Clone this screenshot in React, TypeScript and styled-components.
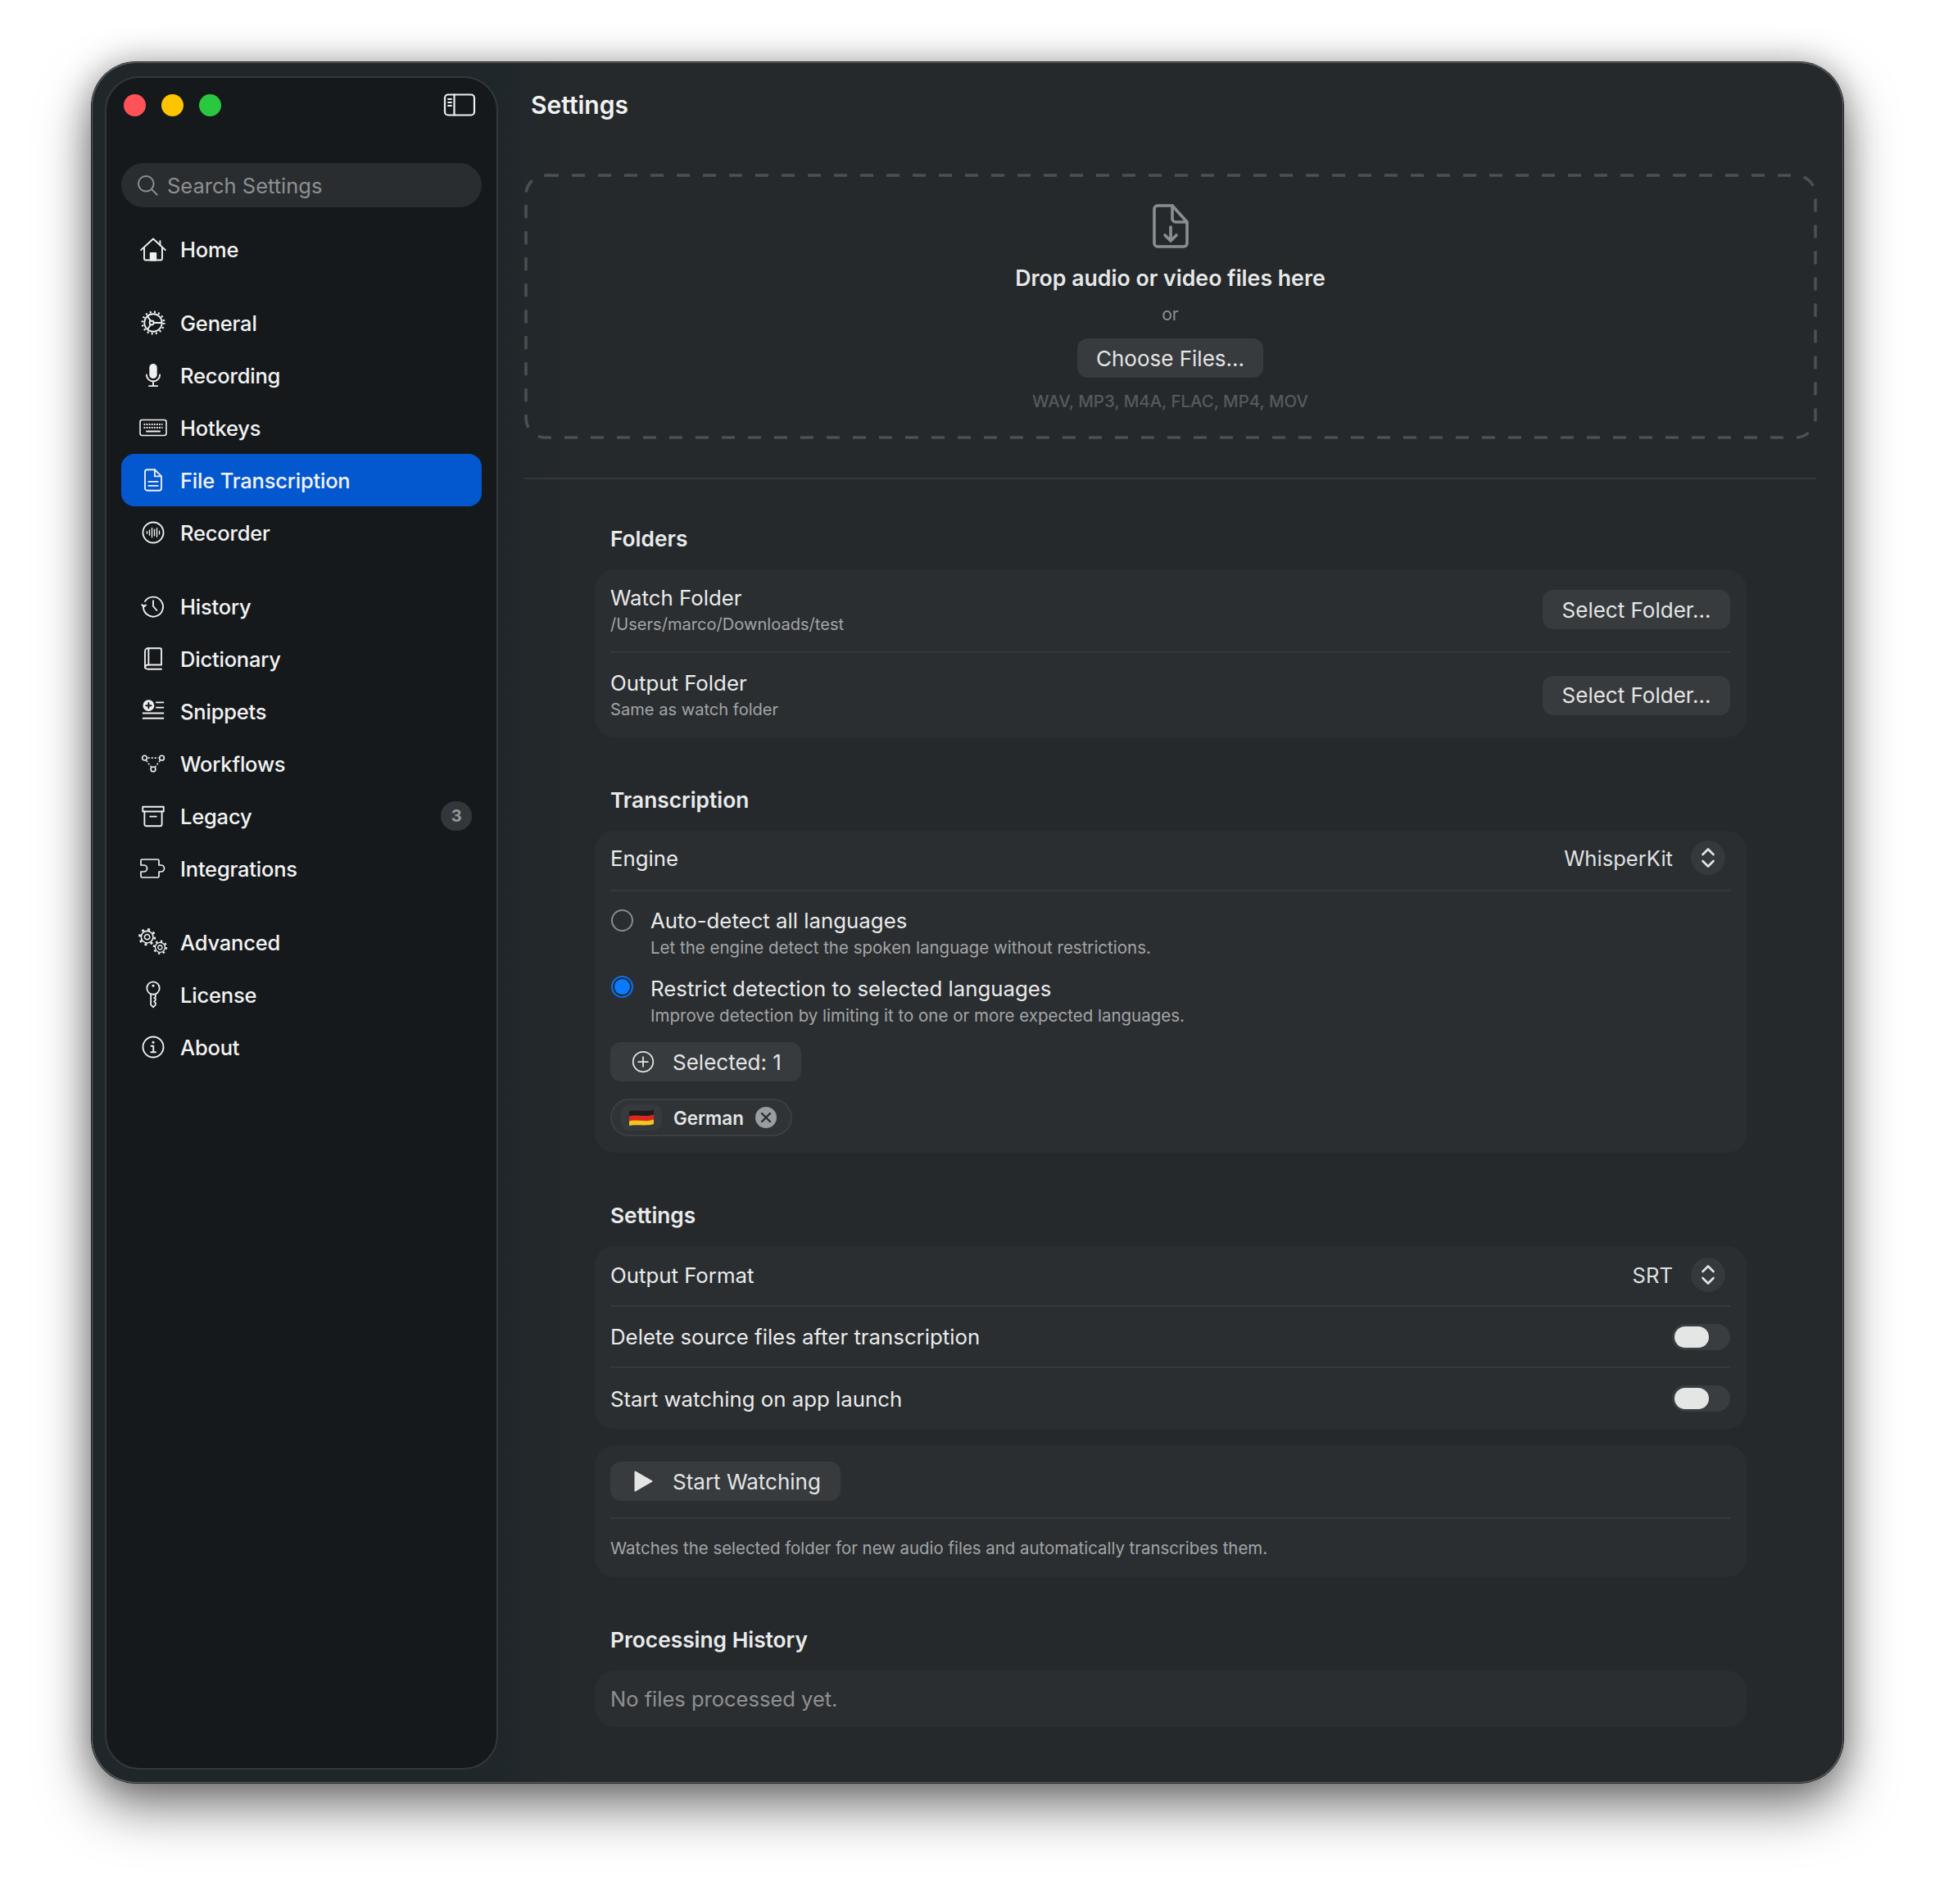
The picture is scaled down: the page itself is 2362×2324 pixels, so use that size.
import React from "react";
import styled, { createGlobalStyle } from "styled-components";

const GlobalStyle = createGlobalStyle`
  html, body {
    margin: 0;
    padding: 0;
    background: #fff;
    font-family: Inter, "Noto Sans", "Liberation Sans", sans-serif;
    -webkit-font-smoothing: antialiased;
  }
  * { box-sizing: border-box; }
`;

const Page = styled.div`
  width: 2362px;
  height: 2324px;
  padding: 76px 112px 0 112px;
  overflow: hidden;
`;

const Window = styled.div`
  display: flex;
  width: 2138px;
  height: 2100px;
  padding: 17px 0 16px 16px;
  border-radius: 54px;
  background: linear-gradient(90deg, #20272a 0, #20272a 500px, #25292c 590px);
  box-shadow:
    0 0 0 1px #1c1c1c,
    inset 0 0 0 1px #5c6063,
    0 30px 64px rgba(0, 0, 0, 0.5),
    0 0 40px rgba(0, 0, 0, 0.28);
`;

/* sidebar */

const Sidebar = styled.aside`
  flex: none;
  width: 480px;
  padding: 0 18px;
  border: 2px solid #33383b;
  border-radius: 42px;
  background: #16191c;
  color: #eef0f0;
`;

const TopBar = styled.div`
  display: flex;
  align-items: center;
  justify-content: space-between;
  height: 66px;
  margin: 0 0 0 3px;
  padding-right: 7px;
`;

const Lights = styled.div`
  display: flex;
  gap: 19px;
`;

const Light = styled.span<{ $color: string }>`
  width: 27px;
  height: 27px;
  border-radius: 50%;
  background: ${(p) => p.$color};
`;

const Search = styled.div`
  display: flex;
  align-items: center;
  gap: 10px;
  height: 54px;
  margin-top: 38px;
  padding-left: 18px;
  border-radius: 27px;
  background: #2a2d30;
  color: #8d9092;
  font-size: 25.5px;
`;

const NavGroup = styled.nav`
  margin-top: 26px;
  &:first-of-type {
    margin-top: 19px;
  }
`;

const NavRow = styled.div<{ $active?: boolean }>`
  display: flex;
  align-items: center;
  height: 64px;
  padding: 0 14px 0 16px;
  border-radius: 16px;
  background: ${(p) => (p.$active ? "#0358d0" : "transparent")};
  color: #f2f3f3;
  font-size: 25.5px;
  font-weight: 500;
  letter-spacing: -0.2px;
`;

const NavIcon = styled.span`
  display: flex;
  flex: none;
  align-items: center;
  justify-content: center;
  width: 46px;
  margin-right: 10px;
  color: #eef0f0;
`;

const NavLabel = styled.span`
  flex: 1;
`;

const Badge = styled.span`
  display: flex;
  align-items: center;
  justify-content: center;
  width: 38px;
  height: 36px;
  margin-right: -2px;
  border-radius: 18px;
  background: #34373a;
  color: #95989a;
  font-size: 20px;
  font-weight: 700;
`;

/* main column */

const Main = styled.main`
  flex: 1;
  min-width: 0;
  margin-top: -17px;
  padding: 0 33px 0 32px;
`;

const TitleBar = styled.header`
  display: flex;
  align-items: center;
  height: 104px;
  padding-left: 8px;
  color: #f1f2f2;
  font-size: 30px;
  font-weight: 600;
`;

const Dropzone = styled.section`
  position: relative;
  display: flex;
  flex-direction: column;
  align-items: center;
  height: 323px;
  margin-top: 32px;
  padding-top: 37px;
`;

const DashFrame = styled.svg`
  position: absolute;
  top: 1.5px;
  left: 1.5px;
  width: calc(100% - 3px);
  height: calc(100% - 3px);
  overflow: visible;
`;

const DropTitle = styled.div`
  margin-top: 18px;
  color: #e6e8e8;
  font-size: 26.7px;
  font-weight: 600;
  line-height: 36px;
`;

const DropOr = styled.div`
  margin-top: 13px;
  color: #8d9092;
  font-size: 21px;
  line-height: 28px;
`;

const Formats = styled.div`
  margin-top: 15px;
  color: #565a5d;
  font-size: 20.4px;
  font-weight: 500;
  line-height: 28px;
`;

const Button = styled.button<{ $width?: number; $top?: number }>`
  display: inline-flex;
  flex: none;
  align-items: center;
  justify-content: ${(p) => (p.$width ? "center" : "flex-start")};
  gap: 22px;
  width: ${(p) => (p.$width ? `${p.$width}px` : "auto")};
  height: 48px;
  margin-top: ${(p) => p.$top ?? 0}px;
  padding: ${(p) => (p.$width ? "0" : "0 24px 0 26px")};
  border: 0;
  border-radius: 13px;
  background: #383b3e;
  color: #e3e5e5;
  font-family: inherit;
  font-size: 26px;
  font-weight: 400;
`;

const Rule = styled.hr`
  height: 2px;
  margin: 48px 0 0;
  border: 0;
  background: #34383b;
`;

const Content = styled.div`
  margin: 0 85px 0 86px;
  padding-top: 54px;
`;

const Section = styled.section`
  margin-top: 58px;
  &:first-child {
    margin-top: 0;
  }
`;

const SectionTitle = styled.h2`
  height: 36px;
  margin: 0 0 20px;
  padding: 1px 0 0 19px;
  color: #e9ebeb;
  font-size: 26.3px;
  font-weight: 600;
  line-height: 36px;
`;

const Card = styled.div<{ $top?: number }>`
  margin-top: ${(p) => p.$top ?? 0}px;
  padding: 0 20px 0 19px;
  border-radius: 24px;
  background: #2b2e31;
`;

const Row = styled.div<{ $height: number; $divider?: boolean; $pad?: number }>`
  display: flex;
  align-items: center;
  justify-content: space-between;
  height: ${(p) => p.$height}px;
  padding-bottom: ${(p) => p.$pad ?? 0}px;
  border-bottom: ${(p) => (p.$divider ? "2px solid #35393c" : "0")};
  color: #e9ebeb;
  font-size: 25.8px;
`;

const RowText = styled.div<{ $shift?: number }>`
  display: flex;
  flex-direction: column;
  margin-top: ${(p) => p.$shift ?? 0}px;
`;

const RowTitle = styled.div`
  color: #e9ebeb;
  font-size: 25.8px;
  line-height: 32px;
`;

const RowHint = styled.div`
  color: #a2a5a7;
  font-size: 20.1px;
  line-height: 32px;
`;

const Picker = styled.div`
  display: flex;
  align-items: center;
  gap: 22px;
  margin-right: 6px;
  color: #dfe1e2;
  font-size: 25.6px;
`;

const PickerKnob = styled.span`
  display: flex;
  align-items: center;
  justify-content: center;
  width: 42px;
  height: 42px;
  border-radius: 50%;
  background: #36393c;
  color: #e3e5e5;
`;

const Options = styled.div`
  padding: 20px 0 20px;
`;

const Option = styled.div<{ $top?: number }>`
  display: flex;
  gap: 21px;
  margin-top: ${(p) => p.$top ?? 0}px;
  padding-left: 1px;
`;

const Radio = styled.span<{ $on?: boolean; $nudge: number }>`
  flex: none;
  width: 27px;
  height: 27px;
  margin-top: ${(p) => p.$nudge}px;
  border-radius: 50%;
  border: 2px solid ${(p) => (p.$on ? "#0a6ff0" : "#8a8d8f")};
  background: ${(p) => (p.$on ? "#0a7bff" : "transparent")};
  box-shadow: ${(p) => (p.$on ? "inset 0 0 0 2px #24282b" : "none")};
`;

const OptionHint = styled.div`
  padding-top: 2px;
  height: 30px;
  color: #a2a5a7;
  font-size: 20.5px;
  line-height: 30px;
`;

const Chip = styled.div`
  display: inline-flex;
  align-items: center;
  height: 46px;
  margin-top: 21px;
  padding: 0 17px 0 11px;
  border: 2px solid #3b3f42;
  border-radius: 23px;
  background: #2f3336;
  color: #e3e5e5;
  font-size: 22.4px;
  font-weight: 600;
`;

const FlagBox = styled.span`
  display: flex;
  align-items: center;
  justify-content: center;
  width: 50px;
  height: 32px;
  margin-right: 14px;
  border-radius: 10px;
  background: #363a3d;
`;

const ChipClose = styled.span`
  display: flex;
  align-items: center;
  justify-content: center;
  width: 26px;
  height: 26px;
  margin-left: 14px;
  border-radius: 50%;
  background: #9a9d9f;
  color: #2b2e31;
`;

const Switch = styled.span`
  display: flex;
  align-items: center;
  width: 71px;
  height: 32px;
  padding-left: 3px;
  border-radius: 16px;
  background: #3a3d40;
`;

const SwitchKnob = styled.span`
  width: 42px;
  height: 26px;
  border-radius: 13px;
  background: #e4e5e5;
`;

const WatchTop = styled.div`
  padding: 20px 0;
  border-bottom: 2px solid #35393c;
`;

const WatchNote = styled.div`
  padding: 22px 0 21px;
  color: #a2a5a7;
  font-size: 20.4px;
  line-height: 28px;
`;

const EmptyNote = styled.div`
  display: flex;
  align-items: center;
  height: 69px;
  color: #8e9193;
  font-size: 25.5px;
`;

/* drawings */

const Svg = ({ w = 30, h = 30, box = "0 0 24 24", sw = 1.5, children }: { w?: number; h?: number; box?: string; sw?: number; children: React.ReactNode }) => (
  <svg width={w} height={h} viewBox={box} fill="none" stroke="currentColor" strokeWidth={sw} strokeLinecap="round" strokeLinejoin="round">
    {children}
  </svg>
);

const HomeIcon = () => (
  <Svg box="0 0 26 24" w={34} h={31}>
    <path d="M1.5 12.500 13 2l11.500 10.500" />
    <path d="M4.500 10v10.500a1.500 1.500 0 0 0 1.500 1.500h14a1.500 1.500 0 0 0 1.500-1.500V10" />
    <path d="M19.500 4v4" />
    <path d="M10.500 22v-6.500h5V22z" fill="currentColor" />
  </Svg>
);

const GeneralIcon = () => (
  <Svg>
    <circle cx="12" cy="12" r="8.600" />
    <circle cx="12" cy="12" r="10.600" strokeWidth="2" strokeDasharray="1.600 2.600" strokeLinecap="butt" />
    <circle cx="10.500" cy="12" r="2" />
    <path d="M12.500 12h7.500M9.500 10.300 6.500 5.600M9.500 13.700 6.500 18.400" />
  </Svg>
);

const MicIcon = () => (
  <Svg>
    <rect x="9" y="1.500" width="6" height="13" rx="3" fill="currentColor" />
    <path d="M5.500 11.500a6.500 6.500 0 0 0 13 0" />
    <path d="M12 18v4M8 22.500h8" />
  </Svg>
);

const KeyboardIcon = () => (
  <Svg w={34} h={24} box="0 0 34 24" sw={1.600}>
    <rect x="1" y="2.500" width="32" height="19" rx="2.500" />
    <path d="M5.500 8h23M5.500 12h23" strokeWidth="2" strokeDasharray="1.800 1.300" strokeLinecap="butt" />
    <path d="M9 16.500h16" strokeWidth="2" />
  </Svg>
);

const DocIcon = () => (
  <Svg>
    <path d="M6 1.800h7.500L20 8.300V20a2.200 2.200 0 0 1-2.200 2.200H6.200A2.200 2.200 0 0 1 4 20V3.800a2 2 0 0 1 2-2z" />
    <path d="M13.500 1.800v6.500H20" />
    <path d="M7.500 13.500h9M7.500 17.500h9" />
  </Svg>
);

const RecorderIcon = () => (
  <Svg>
    <circle cx="12" cy="12" r="10" />
    <path d="M6 11v2M8.400 9.500v5M10.800 7.500v9M13.200 9v6M15.600 7.800v8.400M18 10.500v3" strokeWidth="1.100" />
  </Svg>
);

const HistoryIcon = () => (
  <Svg>
    <path d="M4 7.200A9.600 9.600 0 1 1 2.400 12" />
    <path d="M1 10.500l1.700 2.200 2.200-1.900" fill="currentColor" />
    <path d="M12 6.500V12l3.500 4" />
  </Svg>
);

const BookIcon = () => (
  <Svg>
    <path d="M7 1.800h11.500a1.500 1.500 0 0 1 1.500 1.500V18H7a3 3 0 0 0-3 3V4.800a3 3 0 0 1 3-3z" />
    <path d="M4 19.500a2.700 2.700 0 0 0 3 2.700h13" />
    <path d="M7.500 2v16" />
  </Svg>
);

const SnippetsIcon = () => (
  <Svg>
    <circle cx="7.500" cy="6.500" r="4.800" fill="currentColor" />
    <path d="M7.500 4v5M5 6.500h5" stroke="#16191c" strokeWidth="1.600" />
    <path d="M14.500 3.500h8M14.500 8.500h8M1.500 14h21M1.500 19h21" strokeLinecap="butt" />
  </Svg>
);

const WorkflowIcon = () => (
  <Svg sw={1.300}>
    <circle cx="3.600" cy="6.500" r="2.300" />
    <circle cx="20.400" cy="6.500" r="2.300" />
    <circle cx="12" cy="17.500" r="2.300" />
    <path d="M7 6.500h10M5.400 9.200l4.600 6M18.600 9.200l-4.600 6" strokeDasharray="1.600 1.600" strokeLinecap="butt" />
  </Svg>
);

const ArchiveIcon = () => (
  <Svg>
    <path d="M1.800 3h20.400v4.600H1.800z" />
    <path d="M3.500 7.600V20a1.800 1.800 0 0 0 1.800 1.800h13.400a1.800 1.800 0 0 0 1.800-1.800V7.600" />
    <path d="M9 12.500h6" />
  </Svg>
);

const PuzzleIcon = () => (
  <Svg w={34} h={26} box="0 0 34 26" sw={1.700}>
    <path d="M2 3.500A1.500 1.500 0 0 1 3.500 2h19A1.500 1.500 0 0 1 24 3.500V9h2.500a4 4 0 0 1 0 8H24v5.500a1.500 1.500 0 0 1-1.500 1.500h-19A1.500 1.500 0 0 1 2 22.500V17h3.500a4 4 0 0 0 0-8H2z" />
  </Svg>
);

const Cog = ({ x, y, s }: { x: number; y: number; s: number }) => (
  <g transform={`translate(${x} ${y}) scale(${s})`}>
    <circle r="2.600" />
    <circle r="7.600" strokeWidth="2.200" strokeDasharray="2.400 3.600" strokeLinecap="butt" />
    <circle r="6" />
  </g>
);

const AdvancedIcon = () => (
  <Svg w={38} h={34} box="0 0 36 32" sw={1.300}>
    <Cog x={11} y={10} s={1.150} />
    <Cog x={26} y={22} s={0.950} />
  </Svg>
);

const KeyIcon = () => (
  <Svg w={24} h={34} box="0 0 20 30" sw={1.600}>
    <circle cx="10" cy="8" r="6.800" />
    <circle cx="10" cy="5.500" r="1.300" fill="currentColor" stroke="none" />
    <path d="M7.500 14.500V26l2.500 2.500 2.500-2.500v-2l-1.500-1.500 1.500-1.500v-1.500l-1.500-1 1.500-1v-2" />
  </Svg>
);

const InfoIcon = () => (
  <Svg>
    <circle cx="12" cy="12" r="10" />
    <circle cx="12" cy="7.300" r="1.200" fill="currentColor" stroke="none" />
    <path d="M10 11h2.200v6M9.800 17h4.600" />
  </Svg>
);

const PanelIcon = () => (
  <Svg w={40} h={30} box="0 0 40 30" sw={2.200}>
    <rect x="2" y="2.500" width="36" height="25" rx="4" />
    <path d="M13.500 2.500v25" />
    <path d="M6 8h4M6 12h4M6 16h4" strokeWidth="1.800" />
  </Svg>
);

const SearchIcon = () => (
  <Svg w={28} h={28} box="0 0 24 24" sw={1.700}>
    <circle cx="10.500" cy="10.500" r="8" />
    <path d="M16.500 16.500 22 22" />
  </Svg>
);

const FileDownIcon = () => (
  <svg width="44" height="54" viewBox="0 0 44 54" fill="none" stroke="#8b8e90" strokeWidth="3.600" strokeLinecap="round" strokeLinejoin="round">
    <path d="M6 2h18l18 20v26a4 4 0 0 1-4 4H6a4 4 0 0 1-4-4V6a4 4 0 0 1 4-4z" />
    <path d="M24 2v16a4 4 0 0 0 4 4h14" />
    <path d="M22 28v16M15 38l7 7 7-7" />
  </svg>
);

const UpDownIcon = () => (
  <Svg w={20} h={28} box="0 0 20 28" sw={2.600}>
    <path d="M3.500 10 10 3.500 16.500 10M3.500 18l6.500 6.500 6.500-6.500" />
  </Svg>
);

const PlusCircleIcon = () => (
  <Svg w={28} h={28} box="0 0 24 24" sw={1.500}>
    <circle cx="12" cy="12" r="10.500" />
    <path d="M12 7v10M7 12h10" />
  </Svg>
);

const PlayIcon = () => (
  <svg width="28" height="26" viewBox="0 0 28 26">
    <path d="M4.500 1.500 24.500 13l-20 11.500z" fill="#e3e5e5" stroke="#e3e5e5" strokeWidth="2" strokeLinejoin="round" />
  </svg>
);

const CloseIcon = () => (
  <Svg w={14} h={14} box="0 0 14 14" sw={2.400}>
    <path d="M2 2l10 10M12 2 2 12" />
  </Svg>
);

const GermanFlag = () => (
  <svg width="32" height="22" viewBox="0 0 32 22">
    <path d="M1 3.500C9 1 21 5 31 1.500V8C21 11 9 7.500 1 10z" fill="#1c1c1c" />
    <path d="M1 9.500C9 7 21 11 31 7.500V14C21 17 9 13.500 1 16z" fill="#d8281f" />
    <path d="M1 15.500C9 13 21 17 31 13.500V19C21 22 9 19 1 21z" fill="#f7c51e" />
  </svg>
);

const groups = [
  [{ label: "Home", icon: <HomeIcon /> }],
  [
    { label: "General", icon: <GeneralIcon /> },
    { label: "Recording", icon: <MicIcon /> },
    { label: "Hotkeys", icon: <KeyboardIcon /> },
    { label: "File Transcription", icon: <DocIcon />, active: true },
    { label: "Recorder", icon: <RecorderIcon /> },
  ],
  [
    { label: "History", icon: <HistoryIcon /> },
    { label: "Dictionary", icon: <BookIcon /> },
    { label: "Snippets", icon: <SnippetsIcon /> },
    { label: "Workflows", icon: <WorkflowIcon /> },
    { label: "Legacy", icon: <ArchiveIcon />, badge: "3" },
    { label: "Integrations", icon: <PuzzleIcon /> },
  ],
  [
    { label: "Advanced", icon: <AdvancedIcon /> },
    { label: "License", icon: <KeyIcon /> },
    { label: "About", icon: <InfoIcon /> },
  ],
];

const SidebarNav = () => (
  <Sidebar>
    <TopBar>
      <Lights>
        <Light $color="#ff5257" />
        <Light $color="#fdc400" />
        <Light $color="#2ac840" />
      </Lights>
      <PanelIcon />
    </TopBar>
    <Search>
      <SearchIcon />
      Search Settings
    </Search>
    {groups.map((items, i) => (
      <NavGroup key={i}>
        {items.map((item) => (
          <NavRow key={item.label} $active={"active" in item}>
            <NavIcon>{item.icon}</NavIcon>
            <NavLabel>{item.label}</NavLabel>
            {"badge" in item && <Badge>{item.badge}</Badge>}
          </NavRow>
        ))}
      </NavGroup>
    ))}
  </Sidebar>
);

const FolderRow = ({ title, hint, height, pad = 0, divider }: { title: string; hint: string; height: number; pad?: number; divider?: boolean }) => (
  <Row $height={height} $divider={divider} $pad={pad}>
    <RowText $shift={pad + 2}>
      <RowTitle>{title}</RowTitle>
      <RowHint>{hint}</RowHint>
    </RowText>
    <Button $width={229}>Select Folder...</Button>
  </Row>
);

const ToggleRow = ({ label, height, divider }: { label: string; height: number; divider?: boolean }) => (
  <Row $height={height} $divider={divider}>
    {label}
    <Switch>
      <SwitchKnob />
    </Switch>
  </Row>
);

const PickerValue = ({ value }: { value: string }) => (
  <Picker>
    {value}
    <PickerKnob>
      <UpDownIcon />
    </PickerKnob>
  </Picker>
);

export default function App() {
  return (
    <Page>
      <GlobalStyle />
      <Window>
        <SidebarNav />
        <Main>
          <TitleBar>Settings</TitleBar>
          <Dropzone>
            <DashFrame>
              <rect x="0" y="0" width="100%" height="100%" rx="24" fill="none" stroke="#4c5053" strokeWidth="3.500" strokeDasharray="16 16" />
            </DashFrame>
            <FileDownIcon />
            <DropTitle>Drop audio or video files here</DropTitle>
            <DropOr>or</DropOr>
            <Button $width={227} $top={15}>Choose Files...</Button>
            <Formats>WAV, MP3, M4A, FLAC, MP4, MOV</Formats>
          </Dropzone>
          <Rule />
          <Content>
            <Section>
              <SectionTitle>Folders</SectionTitle>
              <Card>
                <FolderRow title="Watch Folder" hint="/Users/marco/Downloads/test" height={102} pad={2} divider />
                <FolderRow title="Output Folder" hint="Same as watch folder" height={103} />
              </Card>
            </Section>
            <Section>
              <SectionTitle>Transcription</SectionTitle>
              <Card>
                <Row $height={74} $divider $pad={6}>
                  Engine
                  <PickerValue value="WhisperKit" />
                </Row>
                <Options>
                  <Option>
                    <Radio $nudge={2} />
                    <RowText>
                      <RowTitle>Auto-detect all languages</RowTitle>
                      <OptionHint>Let the engine detect the spoken language without restrictions.</OptionHint>
                    </RowText>
                  </Option>
                  <Option $top={21}>
                    <Radio $on $nudge={0} />
                    <RowText>
                      <RowTitle>Restrict detection to selected languages</RowTitle>
                      <OptionHint>Improve detection by limiting it to one or more expected languages.</OptionHint>
                    </RowText>
                  </Option>
                  <Button $top={19}>
                    <PlusCircleIcon />
                    Selected: 1
                  </Button>
                  <div>
                    <Chip>
                      <FlagBox>
                        <GermanFlag />
                      </FlagBox>
                      German
                      <ChipClose>
                        <CloseIcon />
                      </ChipClose>
                    </Chip>
                  </div>
                </Options>
              </Card>
            </Section>
            <Section>
              <SectionTitle>Settings</SectionTitle>
              <Card>
                <Row $height={74} $divider $pad={2}>
                  Output Format
                  <PickerValue value="SRT" />
                </Row>
                <ToggleRow label="Delete source files after transcription" height={75} divider />
                <ToggleRow label="Start watching on app launch" height={74} />
              </Card>
              <Card $top={20}>
                <WatchTop>
                  <Button>
                    <PlayIcon />
                    Start Watching
                  </Button>
                </WatchTop>
                <WatchNote>Watches the selected folder for new audio files and automatically transcribes them.</WatchNote>
              </Card>
            </Section>
            <Section>
              <SectionTitle>Processing History</SectionTitle>
              <Card>
                <EmptyNote>No files processed yet.</EmptyNote>
              </Card>
            </Section>
          </Content>
        </Main>
      </Window>
    </Page>
  );
}
